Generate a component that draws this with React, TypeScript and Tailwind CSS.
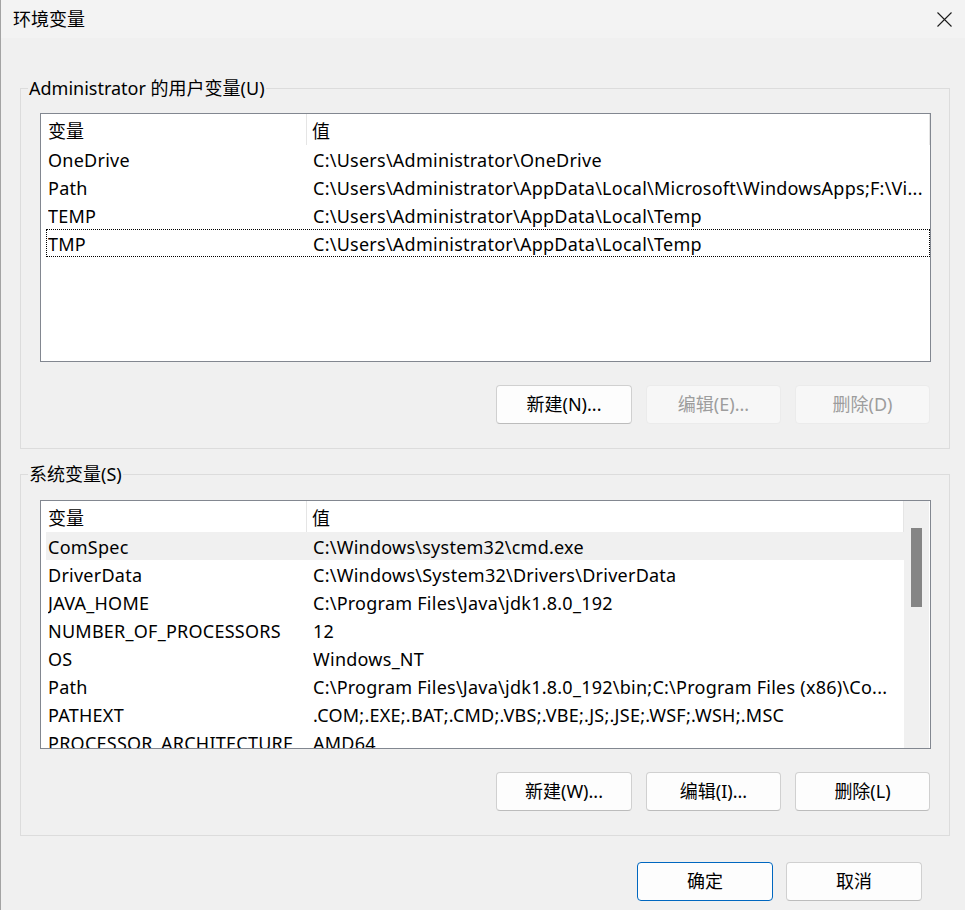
import React from 'react';

const FONT = "font-['Noto_Sans','Noto_Sans_CJK_SC',sans-serif]";

type Row = { name: string; value: string };

const USER_VARS: Row[] = [
  { name: 'OneDrive', value: 'C:\\Users\\Administrator\\OneDrive' },
  { name: 'Path', value: 'C:\\Users\\Administrator\\AppData\\Local\\Microsoft\\WindowsApps;F:\\Vi...' },
  { name: 'TEMP', value: 'C:\\Users\\Administrator\\AppData\\Local\\Temp' },
  { name: 'TMP', value: 'C:\\Users\\Administrator\\AppData\\Local\\Temp' },
];

const SYSTEM_VARS: Row[] = [
  { name: 'ComSpec', value: 'C:\\Windows\\system32\\cmd.exe' },
  { name: 'DriverData', value: 'C:\\Windows\\System32\\Drivers\\DriverData' },
  { name: 'JAVA_HOME', value: 'C:\\Program Files\\Java\\jdk1.8.0_192' },
  { name: 'NUMBER_OF_PROCESSORS', value: '12' },
  { name: 'OS', value: 'Windows_NT' },
  { name: 'Path', value: 'C:\\Program Files\\Java\\jdk1.8.0_192\\bin;C:\\Program Files (x86)\\Co...' },
  { name: 'PATHEXT', value: '.COM;.EXE;.BAT;.CMD;.VBS;.VBE;.JS;.JSE;.WSF;.WSH;.MSC' },
  { name: 'PROCESSOR_ARCHITECTURE', value: 'AMD64' },
];

// ── 按钮 ─────────────────────────────────────────────
function WinButton({
  children,
  disabled,
  primary,
  wide,
}: {
  children: React.ReactNode;
  disabled?: boolean;
  primary?: boolean;
  wide?: boolean;
}) {
  const base = `${wide ? 'w-[136px]' : 'w-[135px]'} h-[39px] rounded-[4px] flex items-center justify-center text-[18px]`;
  if (disabled) {
    return (
      <div className={`${base} bg-[#f7f7f7] border border-[#ebebeb] text-[#9d9d9d]`}>{children}</div>
    );
  }
  if (primary) {
    return (
      <div className={`${base} bg-[#fdfdfd] border border-[#0067c0] text-black`}>{children}</div>
    );
  }
  return (
    <div className={`${base} bg-[#fdfdfd] border border-[#d0d0d0] border-b-[#bcbcbc] text-black`}>
      {children}
    </div>
  );
}

// ── 列表（ListView） ──────────────────────────────────
function VarList({
  rows,
  focusIndex,
  hoverIndex,
  scrollbar,
}: {
  rows: Row[];
  focusIndex?: number;
  hoverIndex?: number;
  scrollbar?: boolean;
}) {
  return (
    <div className="h-[249px] border border-[#828790] bg-white flex overflow-hidden">
      <div className="flex-1 flex flex-col overflow-hidden">
        {/* 表头 */}
        <div className="h-[31px] flex items-center shrink-0 text-[18px] text-black">
          <div className="w-[266px] h-full pl-[7px] pt-[3px] flex items-center border-r border-[#e5e5e5]">变量</div>
          <div className="flex-1 h-full pl-[5px] pt-[3px] flex items-center border-r border-[#e5e5e5]">值</div>
        </div>
        {rows.map((r, i) => {
          const focused = i === focusIndex;
          return (
            <div
              key={r.name + i}
              className={[
                'h-[28px] ml-[5px] pt-[2px] flex items-center shrink-0 text-[18px] tracking-[0.25px] text-black',
                focused ? 'border border-dotted border-black' : '',
                i === hoverIndex ? 'bg-[#f0f0f0]' : '',
              ].join(' ')}
            >
              <div className={`shrink-0 ${focused ? 'w-[266px] pl-[1px]' : 'w-[267px] pl-[2px]'}`}>
                <div className="w-[249px] overflow-hidden whitespace-nowrap">{r.name}</div>
              </div>
              <div className="flex-1 whitespace-nowrap overflow-hidden">{r.value}</div>
            </div>
          );
        })}
      </div>
      {scrollbar && (
        <div className="w-[25px] mr-[1px] bg-[#f0f0f0] flex justify-center pt-[27px] shrink-0">
          <div className="w-[11px] h-[79px] bg-[#858585]" />
        </div>
      )}
    </div>
  );
}

// ── 分组框 ────────────────────────────────────────────
function GroupBox({
  title,
  children,
  className,
  padTop,
}: {
  title: string;
  children: React.ReactNode;
  className?: string;
  padTop: string;
}) {
  return (
    <fieldset className={`mx-[19px] w-[930px] border border-[#dcdcdc] p-0 ${className ?? ''}`}>
      <legend className="ml-[7px] px-[1px] leading-[24px] text-[18px] text-black">{title}</legend>
      <div className={`pl-[19px] pr-[18px] pb-[24px] ${padTop}`}>{children}</div>
    </fieldset>
  );
}

export default function App() {
  return (
    <div className={`w-[965px] h-[910px] bg-[#f0f0f0] border-l border-[#a3a3a3] ${FONT}`}>
      {/* 标题栏 */}
      <div className="h-[38px] bg-[#f3f3f3] flex items-center justify-between pl-[12px] pr-[13px]">
        <span className="text-[18px] text-black">环境变量</span>
        <svg width="15" height="15" viewBox="0 0 15 15" className="mt-[1px]">
          <path d="M0.5 0.5 L14.5 14.5 M14.5 0.5 L0.5 14.5" stroke="#1b1b1b" strokeWidth="1.1" fill="none" />
        </svg>
      </div>

      <GroupBox title="Administrator 的用户变量(U)" className="mt-[38px]" padTop="pt-[13px]">
        <VarList rows={USER_VARS} focusIndex={3} />
        <div className="flex justify-end gap-[14px] mt-[23px] mr-[1px]">
          <WinButton wide>新建(N)...</WinButton>
          <WinButton disabled>编辑(E)...</WinButton>
          <WinButton disabled>删除(D)</WinButton>
        </div>
      </GroupBox>

      <GroupBox title="系统变量(S)" className="mt-[13px]" padTop="pt-[14px]">
        <VarList rows={SYSTEM_VARS} hoverIndex={0} scrollbar />
        <div className="flex justify-end gap-[14px] mt-[23px] mr-[1px]">
          <WinButton wide>新建(W)...</WinButton>
          <WinButton>编辑(I)...</WinButton>
          <WinButton>删除(L)</WinButton>
        </div>
      </GroupBox>

      {/* 底部按钮 */}
      <div className="flex justify-end gap-[13px] pr-[43px] mt-[26px]">
        <WinButton primary wide>确定</WinButton>
        <WinButton wide>取消</WinButton>
      </div>
    </div>
  );
}
